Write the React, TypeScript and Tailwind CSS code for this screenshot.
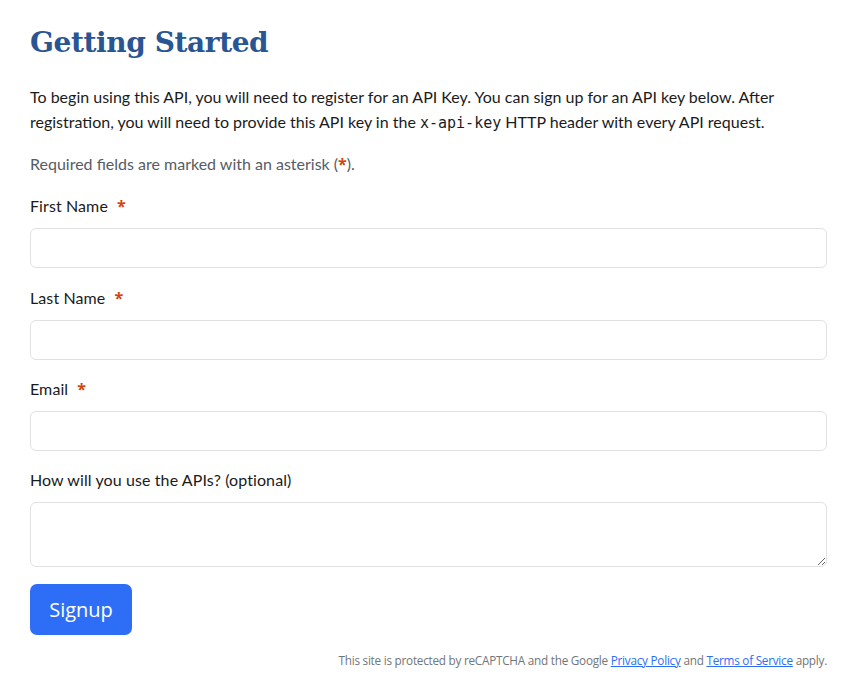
import React from "react";

function Label({ text, required }: { text: string; required?: boolean }) {
  return (
    <label className="block text-[16px] leading-[24px] text-[#1b1b1b] tracking-[0.1px]">
      {text}
      {required && (
        <span className="ml-[9px] font-['Open_Sans',sans-serif] font-bold text-[#d54309]">*</span>
      )}
    </label>
  );
}

export default function App() {
  return (
    <div className="min-h-[691px] w-full bg-white font-['Lato','Open_Sans',sans-serif]">
      <div className="pl-[30px] pr-[24px] pt-[23px] pb-[20px]">
        <h1 className="font-['DejaVu_Serif',serif] font-bold text-[28px] leading-[40px] text-[#2a5593] tracking-[-0.4px]">
          Getting Started
        </h1>
        <p className="mt-[21px] text-[16px] leading-[25px] text-[#1b1b1b]">
          To begin using this API, you will need to register for an API Key. You can sign up for an API key below. After
          registration, you will need to provide this API key in the{" "}
          <code className="font-['DejaVu_Sans_Mono',monospace] text-[15px]">x-api-key</code> HTTP header with every API
          request.
        </p>
        <p className="mt-[16px] text-[16px] leading-[24px] text-[#565c65]">
          Required fields are marked with an asterisk (
          <span className="font-['Open_Sans',sans-serif] font-bold text-[#d54309]">*</span>).
        </p>
        <form className="mt-[18px] flex flex-col">
          <Label text="First Name" required />
          <input className="mt-[10px] h-[40px] w-full rounded-[6px] border border-[#dfe1e2] bg-white" />
          <div className="mt-[18px]">
            <Label text="Last Name" required />
          </div>
          <input className="mt-[10px] h-[40px] w-full rounded-[6px] border border-[#dfe1e2] bg-white" />
          <div className="mt-[17px]">
            <Label text="Email" required />
          </div>
          <input className="mt-[10px] h-[40px] w-full rounded-[6px] border border-[#dfe1e2] bg-white" />
          <div className="mt-[17px]">
            <Label text="How will you use the APIs? (optional)" />
          </div>
          <textarea className="mt-[10px] h-[65px] w-full rounded-[6px] border border-[#dfe1e2] bg-white block" />
          <div className="mt-[17px]">
            <button
              type="button"
              className="h-[51px] w-[102px] rounded-[7px] bg-[#2e6ef7] text-white text-[20px] font-['Open_Sans',sans-serif]"
            >
              Signup
            </button>
          </div>
          <p className="mt-[17px] text-right text-[11.75px] leading-[16px] text-[#71767a] font-['Open_Sans',sans-serif] tracking-[-0.25px]">
            This site is protected by reCAPTCHA and the Google{" "}
            <a className="text-[#2e6ef7] underline" href="#">
              Privacy Policy
            </a>{" "}
            and{" "}
            <a className="text-[#2e6ef7] underline" href="#">
              Terms of Service
            </a>{" "}
            apply.
          </p>
        </form>
      </div>
    </div>
  );
}
